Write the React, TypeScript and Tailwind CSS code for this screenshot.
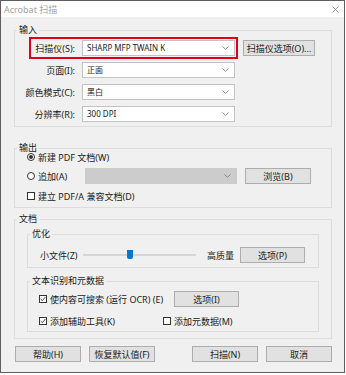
import React from 'react'

const font = { fontFamily: '"Noto Sans", "Noto Sans CJK SC", sans-serif' }

function Btn({ label, className = '' }: { label: string; className?: string }) {
  return (
    <div className={`h-[16px] flex items-center justify-center bg-[#e1e1e1] border border-[#adadad] text-[9px] leading-none text-[#1a1a1a] ${className}`}>
      {label}
    </div>
  )
}

function Chevron() {
  return (
    <svg width="7" height="4" viewBox="0 0 7 4" className="shrink-0">
      <path d="M0.5 0.5 L3.5 3.3 L6.5 0.5" fill="none" stroke="#8a8a8a" strokeWidth="1" />
    </svg>
  )
}

function Select({ value, className = '', disabled = false }: { value: string; className?: string; disabled?: boolean }) {
  return (
    <div
      className={`h-[16px] flex items-center justify-between pl-[4px] pr-[5px] border text-[8px] leading-none ${
        disabled ? 'bg-[#cccccc] border-[#cccccc]' : 'bg-white border-[#c3c3c3] text-[#1a1a1a]'
      } ${className}`}
    >
      <span>{value}</span>
      <Chevron />
    </div>
  )
}

function Check({ checked = false }: { checked?: boolean }) {
  return (
    <div className="w-[8px] h-[8px] border border-[#333333] bg-white flex items-center justify-center shrink-0">
      {checked && (
        <svg width="6" height="6" viewBox="0 0 6 6">
          <path d="M0.6 3 L2.3 4.7 L5.4 1" fill="none" stroke="#333333" strokeWidth="0.9" />
        </svg>
      )}
    </div>
  )
}

function Radio({ checked = false }: { checked?: boolean }) {
  return (
    <div className="w-[8px] h-[8px] rounded-full border border-[#333333] bg-white flex items-center justify-center shrink-0">
      {checked && <div className="w-[4px] h-[4px] rounded-full bg-[#333333]" />}
    </div>
  )
}

function Row({ label, value }: { label: string; value: string }) {
  return (
    <div className="h-[22px] flex items-center">
      <div className="w-[67px] pr-[7px] text-right text-[9px] leading-none">{label}</div>
      <Select value={value} className="w-[153px]" />
    </div>
  )
}

export default function App() {
  return (
    <div className="w-[346px] h-[375px] bg-white" style={font}>
      <div className="w-[345px] h-[373px] border border-[#5f5f5f] bg-[#f0f0f0] flex flex-col text-[#1a1a1a]">
        <div className="h-[16px] bg-white flex items-center justify-between pl-[3px] pr-[5px]">
          <span className="text-[9px] leading-none text-[#a3a3a3]">Acrobat 扫描</span>
          <svg width="7" height="7" viewBox="0 0 7 7">
            <path d="M0.5 0.5 L6.5 6.5 M6.5 0.5 L0.5 6.5" stroke="#8c8c8c" strokeWidth="0.9" />
          </svg>
        </div>

        <div className="pl-[13px] flex flex-col">
          {/* 输入 */}
          <fieldset className="mt-[7px] w-[318px] border border-[#dcdcdc] pb-[1px]">
            <legend className="ml-[2px] px-[2px] text-[9px] leading-[12px]">输入</legend>
            <div className="mt-[1px] flex items-center">
              <div className="ml-[14px] w-[209px] h-[22px] border-2 border-[#e0001b] flex items-center">
                <div className="w-[51px] pr-[7px] text-right text-[9px] leading-none">扫描仪(S):</div>
                <Select value="SHARP MFP TWAIN K" className="w-[153px]" />
              </div>
              <Btn label="扫描仪选项(O)..." className="ml-[5px] w-[72px]" />
            </div>
            <Row label="页面(I):" value="正面" />
            <Row label="颜色模式(C):" value="黑白" />
            <Row label="分辨率(R):" value="300 DPI" />
          </fieldset>

          {/* 输出 */}
          <fieldset className="mt-[15px] w-[318px] border border-[#dcdcdc] pl-[12px] pb-[5px]">
            <legend className="ml-[-10px] px-[2px] text-[9px] leading-[12px]">输出</legend>
            <div className="mt-[-4px] h-[14px] flex items-center gap-[3px] text-[9px] leading-none">
              <Radio checked />
              <span>新建 PDF 文档(W)</span>
            </div>
            <div className="mt-[3px] h-[18px] flex items-center text-[9px] leading-none">
              <Radio />
              <span className="ml-[3px] w-[47px]">追加(A)</span>
              <Select value="" disabled className="w-[152px]" />
              <Btn label="浏览(B)" className="ml-[8px] w-[66px]" />
            </div>
            <div className="mt-[5px] h-[12px] flex items-center gap-[3px] text-[9px] leading-none">
              <Check />
              <span>建立 PDF/A 兼容文档(D)</span>
            </div>
          </fieldset>

          {/* 文档 */}
          <fieldset className="mt-[5px] w-[318px] border border-[#dcdcdc] pl-[12px] pb-[6px]">
            <legend className="ml-[-10px] px-[2px] text-[9px] leading-[12px]">文档</legend>

            <fieldset className="mt-[3px] w-[292px] border border-[#dcdcdc] pb-[4px]">
              <legend className="ml-[2px] px-[2px] text-[9px] leading-[12px]">优化</legend>
              <div className="mt-[7px] h-[16px] flex items-center text-[9px] leading-none">
                <span className="ml-[12px] w-[43px]">小文件(Z)</span>
                <div className="relative w-[113px] h-[2px] bg-[#d6d6d6]">
                  <div className="absolute left-[44px] top-[-4px] w-[6px] h-[9px] bg-[#0078d7] rounded-b-[2px]" />
                </div>
                <span className="ml-[11px] w-[33px]">高质量</span>
                <Btn label="选项(P)" className="w-[65px]" />
              </div>
            </fieldset>

            <fieldset className="mt-[7px] w-[292px] border border-[#dcdcdc] pb-[3px]">
              <legend className="ml-[2px] px-[2px] text-[9px] leading-[12px]">文本识别和元数据</legend>
              <div className="mt-[4px] h-[16px] flex items-center text-[9px] leading-none">
                <div className="ml-[11px]">
                  <Check checked />
                </div>
                <span className="ml-[3px] w-[124px]">使内容可搜索 (运行 OCR) (E)</span>
                <Btn label="选项(I)" className="w-[65px]" />
              </div>
              <div className="mt-[7px] h-[14px] flex items-center text-[9px] leading-none">
                <div className="ml-[11px]">
                  <Check checked />
                </div>
                <span className="ml-[3px] w-[113px]">添加辅助工具(K)</span>
                <Check />
                <span className="ml-[3px]">添加元数据(M)</span>
              </div>
            </fieldset>
          </fieldset>

          {/* buttons */}
          <div className="mt-[7px] flex items-center">
            <Btn label="帮助(H)" className="ml-[1px] w-[66px]" />
            <Btn label="恢复默认值(F)" className="ml-[8px] w-[66px]" />
            <Btn label="扫描(N)" className="ml-[37px] w-[66px]" />
            <Btn label="取消" className="ml-[8px] w-[66px]" />
          </div>
        </div>
      </div>
    </div>
  )
}
